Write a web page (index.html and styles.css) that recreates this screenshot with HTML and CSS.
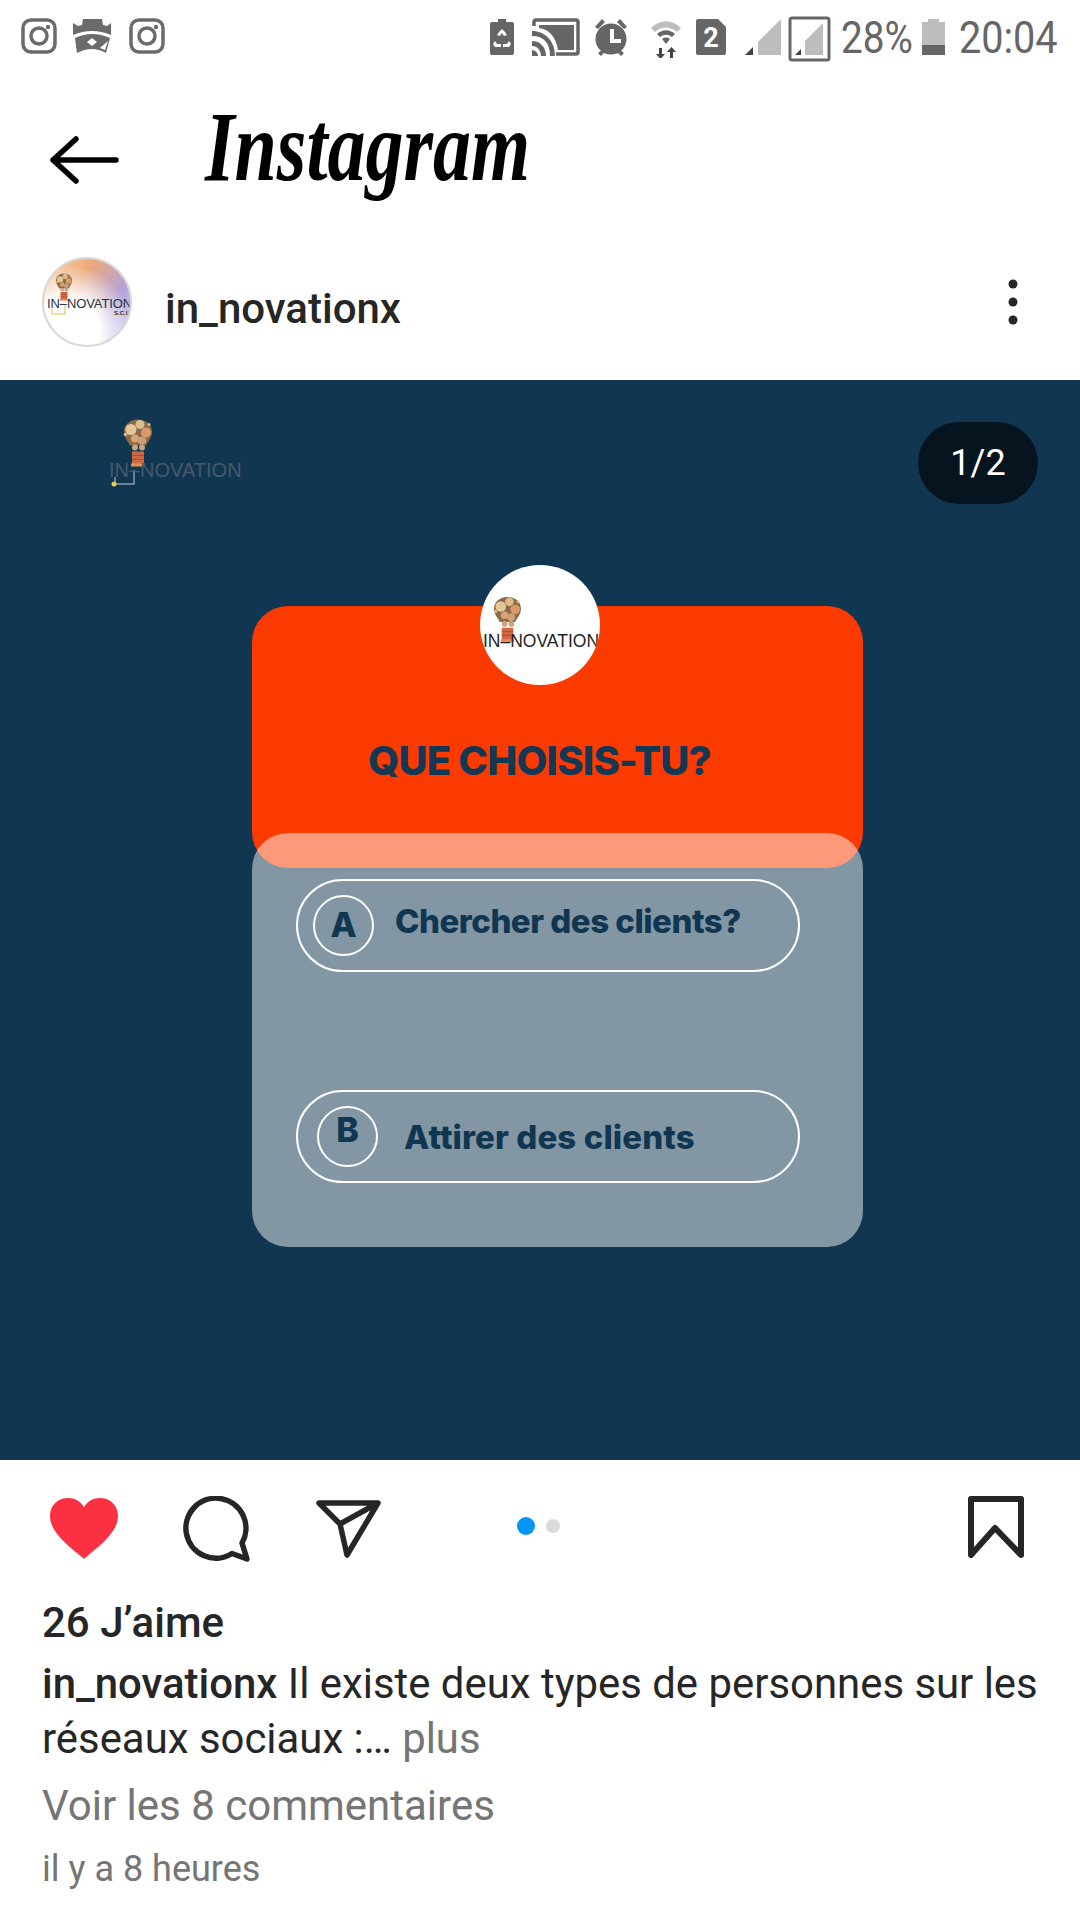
FILE: index.html
```html
<!DOCTYPE html>
<html lang="fr">
<head>
<meta charset="utf-8">
<title>Instagram</title>
<link rel="stylesheet" href="styles.css">
</head>
<body>
<svg class="defs" width="0" height="0">
  <symbol id="bulb" viewBox="0 0 30 52">
    <path d="M15 1C7 1 1 6 1 13c0 6 4 10 6 14h16c2-4 6-8 6-14 0-7-6-12-14-12z" fill="#8a6a4a"/>
    <circle cx="8" cy="11" r="5.500" fill="#e5c796"/><circle cx="17" cy="6" r="4.500" fill="#d9bd8c"/><circle cx="23" cy="14" r="5" fill="#dc9a68"/>
    <circle cx="12" cy="20" r="4" fill="#d9a273"/><circle cx="19" cy="22" r="4" fill="#c9a078"/><circle cx="2.500" cy="16" r="1.800" fill="#d9bd8c"/><circle cx="26" cy="6" r="1.500" fill="#d9bd8c"/>
    <circle cx="12" cy="29" r="3" fill="#cfa27a"/><circle cx="19" cy="29" r="3" fill="#cfa27a"/>
    <path d="M9 33h12v13H9z" fill="#cf6844"/><path d="M8 45h14v3H8z" fill="#e8904f"/><path d="M9 37h12M9 41h12" stroke="#a94f33" stroke-width="1"/>
  </symbol>
</svg>
<div class="page">
  <div class="status">
    <div class="status-left">
      <svg width="52" height="36" viewBox="0 0 52 36"><rect x="2" y="2" width="32" height="32" rx="8" fill="none" stroke="#6b6b6b" stroke-width="3.500"/><circle cx="18" cy="18" r="8" fill="none" stroke="#6b6b6b" stroke-width="3.500"/><circle cx="27" cy="9" r="2.200" fill="#6b6b6b"/></svg>
      <svg width="56" height="36" viewBox="0 0 56 36"><path d="M0 5l5 3 4-1 1-6h19l1 6 4 1 4-3v12Q19 9 0 17z" fill="#6b6b6b"/><path d="M2 20Q19 12 37 20l-4 15Q19 27 4 35z" fill="#6b6b6b"/><path d="M19 20l5 4-5 4-5-4z" fill="#fff"/><path d="M35 23l-3 9-5-2z" fill="#fff"/></svg>
      <svg width="36" height="36" viewBox="0 0 36 36"><rect x="2" y="2" width="32" height="32" rx="8" fill="none" stroke="#6b6b6b" stroke-width="3.500"/><circle cx="18" cy="18" r="8" fill="none" stroke="#6b6b6b" stroke-width="3.500"/><circle cx="27" cy="9" r="2.200" fill="#6b6b6b"/></svg>
    </div>
    <div class="status-right">
      <svg width="42" height="42" viewBox="0 0 42 42"><path d="M8 3h8v3h6a2 2 0 0 1 2 2v29a2 2 0 0 1-2 2H2a2 2 0 0 1-2-2V8a2 2 0 0 1 2-2h6z" fill="#666"/><path d="M9 16l3-3 3 3 2 3-3 1-2-3-2 3-3-1zM5 25l2 3h4v3H5l-2-3zM19 25l-2 3h-4v3h6l2-3z" fill="#fff"/></svg>
      <svg width="61" height="42" viewBox="0 0 61 42"><path d="M2 10V6a2 2 0 0 1 2-2h40a2 2 0 0 1 2 2v30a2 2 0 0 1-2 2H24" fill="none" stroke="#666" stroke-width="3.500"/><path d="M7 9h35v25H26C24 21 17 13 7 12z" fill="#666"/><path d="M0 15c13 0 23 10 23 25h-5C18 27 12 20 0 20z" fill="#666"/><path d="M0 25c8 0 14 6 14 15H9c0-6-4-10-9-10z" fill="#666"/><path d="M0 34c3 0 6 3 6 6H0z" fill="#666"/></svg>
      <svg width="57" height="42" viewBox="0 0 57 42"><circle cx="18" cy="23" r="15.500" fill="#666"/><path d="M2 11l7-8 3 3-7 7zM34 11l-7-8-3 3 7 7zM5 37l3 3 4-4-3-2zM31 37l-3 3-4-4 3-2z" fill="#666"/><path d="M17 13h4v10h7v4H17z" fill="#fff"/></svg>
      <svg width="45" height="42" viewBox="0 0 45 42"><path d="M1 12c9-9 21-9 30 0l-4 4c-7-6-15-6-22 0z" fill="#bdbdbd"/><path d="M7 18c6-5 12-5 18 0l-3 3c-4-3-8-3-12 0z" fill="#666"/><path d="M12 23c3-2 5-2 8 0l-4 5z" fill="#666"/><path d="M9 32h3v6h3l-4.500 5L6 38h3zM20 43v-7h-3l4.500-5 4.500 5h-3v7z" fill="#444"/></svg>
      <svg width="50" height="42" viewBox="0 0 50 42"><path d="M3 3h20l8 8v26a2 2 0 0 1-2 2H3a2 2 0 0 1-2-2V5a2 2 0 0 1 2-2z" fill="#666"/><text x="16" y="31" class="sim-num">2</text></svg>
      <svg width="43" height="42" viewBox="0 0 43 42"><path d="M36 3v36H13V26z" fill="#bdbdbd"/><path d="M8 31v8H0z" fill="#444"/></svg>
      <svg width="53" height="46" viewBox="0 0 53 46"><rect x="2" y="2" width="39" height="42" rx="2" fill="none" stroke="#666" stroke-width="3"/><path d="M35 7v32H17V25z" fill="#bdbdbd"/><path d="M13 33v6H7z" fill="#444"/></svg>
      <span class="status-text pct">28%</span>
      <svg width="37" height="42" viewBox="0 0 37 42"><path d="M6 3h11v3h6v33H0V6h6z" fill="#bdbdbd"/><path d="M0 29h23v10H0z" fill="#666"/></svg>
      <span class="status-text clock">20:04</span>
    </div>
  </div>

  <header class="nav">
    <svg class="back" width="70" height="48" viewBox="0 0 70 48"><path d="M3 24h63M26 3L3 24l23 21" fill="none" stroke="#000" stroke-width="5.500" stroke-linecap="round" stroke-linejoin="round"/></svg>
    <span class="wordmark">Instagram</span>
  </header>

  <div class="author">
    <div class="avatar">
      <svg width="18" height="30" class="avatar-bulb"><use href="#bulb"/></svg>
      <svg class="avatar-wire" width="20" height="14" viewBox="0 0 20 14"><path d="M16 0v9H3V4" fill="none" stroke="#d9c44c" stroke-width="1"/></svg>
      <span class="avatar-text">IN–NOVATION</span>
      <span class="avatar-sub">S.C.U</span>
    </div>
    <span class="author-name">in_novationx</span>
    <svg class="more" width="10" height="46" viewBox="0 0 10 46"><circle cx="5" cy="5" r="4.500"/><circle cx="5" cy="23" r="4.500"/><circle cx="5" cy="41" r="4.500"/></svg>
  </div>

  <main class="photo">
    <div class="photo-top">
      <div class="brand">
        <svg class="brand-bulb" width="30" height="53"><use href="#bulb"/></svg>
        <svg class="brand-wire" width="30" height="20" viewBox="0 0 30 20"><path d="M24 0v14H5V7" fill="none" stroke="#8a9cab" stroke-width="1.500"/><circle cx="4" cy="14" r="2.500" fill="#e0d24c"/></svg>
        <span class="brand-text">IN–NOVATION</span>
      </div>
      <div class="counter">1/2</div>
    </div>

    <section class="quiz">
      <div class="quiz-head">
        <div class="badge">
          <svg width="29" height="50"><use href="#bulb"/></svg>
          <span class="badge-text">IN–NOVATION</span>
        </div>
        <h1 class="quiz-title">QUE CHOISIS-TU?</h1>
      </div>
      <div class="quiz-body">
        <div class="option">
          <span class="option-key">A</span>
          <span class="option-label">Chercher des clients?</span>
        </div>
        <div class="option option-b">
          <span class="option-key key-b">B</span>
          <span class="option-label">Attirer des clients</span>
        </div>
      </div>
    </section>
  </main>

  <div class="actions">
    <svg class="heart" width="70" height="64" viewBox="0 0 70 64"><path d="M35 62C24 52 1 37 1 19 1 8 9 1 19 1c7 0 12 3 16 9 4-6 9-9 16-9 10 0 18 7 18 18 0 18-23 33-34 43z" fill="#fb3040"/></svg>
    <svg class="comment" width="70" height="68" viewBox="0 0 70 68"><path d="M60 47A30 30 0 1 0 50 57.500L65 63z" fill="none" stroke="#262626" stroke-width="5.500" stroke-linejoin="round"/></svg>
    <svg class="send" width="68" height="62" viewBox="0 0 68 62"><path d="M3 5h59L31 57 24 26zM24 26L62 5" fill="none" stroke="#262626" stroke-width="5.500" stroke-linejoin="round"/></svg>
    <div class="dots"><span class="dot dot-on"></span><span class="dot"></span></div>
    <svg class="save" width="56" height="62" viewBox="0 0 56 62"><path d="M3 3h50v56L27 32 3 59z" fill="none" stroke="#262626" stroke-width="6" stroke-linejoin="round"/></svg>
  </div>

  <div class="caption">
    <div class="likes">26 J’aime</div>
    <p class="caption-text"><b>in_novationx</b> Il existe deux types de personnes sur les réseaux sociaux :… <span class="muted">plus</span></p>
    <div class="comments muted">Voir les 8 commentaires</div>
    <div class="time">il y a 8 heures</div>
  </div>
</div>
</body>
</html>
```

FILE: styles.css
```css
* { box-sizing: border-box; }
html, body { margin: 0; padding: 0; background: #fff; }
body { font-family: Roboto, "Liberation Sans", sans-serif; color: #262626; }
.page { width: 1080px; height: 1920px; overflow: hidden; display: flex; flex-direction: column; }
.defs { position: absolute; }
svg { display: block; flex: none; }

.status { height: 72px; flex: none; display: flex; justify-content: space-between; padding: 16px 25px 0 21px; }
.status-left { display: flex; height: 36px; margin-top: 2px; }
.status-right { display: flex; height: 46px; align-items: flex-start; }
.status-text { color: #666; font-size: 45px; line-height: 44px; font-weight: 400; display: block; transform-origin: left top; white-space: nowrap; }
.pct { width: 81px; transform: scaleX(.86); }
.clock { width: 96px; transform: scaleX(.88); }
.sim-num { font: 700 27px Roboto, sans-serif; fill: #fff; text-anchor: middle; }

.nav { height: 176px; flex: none; display: flex; align-items: center; padding-left: 50px; }
.wordmark { margin: 0 0 26px 85px; font-family: "Liberation Serif", serif; font-style: italic; font-weight: 700; font-size: 100px; line-height: 100px; color: #000; transform: scaleX(.76); transform-origin: left center; }

.author { height: 132px; flex: none; display: flex; align-items: flex-start; padding: 0 42px; }
.avatar { width: 90px; height: 90px; margin-top: 9px; border-radius: 50%; border: 2px solid #d8d8d8; position: relative; overflow: hidden; flex: none; background: radial-gradient(circle at 25% 85%, #fff 0 35%, rgba(255,255,255,0) 70%), linear-gradient(125deg, #fbd7a4 0%, #eba87c 35%, #b4a3d6 68%, #cfd9f3 100%); }
.avatar-bulb { position: absolute; left: 11px; top: 14px; }
.avatar-wire { position: absolute; left: 5px; top: 46px; }
.avatar-text { position: absolute; left: 3px; top: 37px; font: 400 13px/16px "Liberation Sans", sans-serif; color: #26323c; letter-spacing: -.1px; white-space: nowrap; }
.avatar-sub { position: absolute; left: 70px; top: 50px; font: 700 6px/8px "Liberation Sans", sans-serif; color: #26323c; }
.author-name { margin: 36px 0 0 33px; font-size: 42px; font-weight: 500; line-height: 50px; }
.more { margin: 31px 20px 0 auto; fill: #262626; }

.photo { height: 1080px; flex: none; background: #113651; padding: 42px 42px 0 109px; display: flex; flex-direction: column; }
.photo-top { display: flex; justify-content: space-between; align-items: flex-start; height: 184px; }
.brand { position: relative; width: 132px; height: 72px; }
.brand-bulb { position: absolute; left: 14px; top: -4px; }
.brand-wire { position: absolute; left: 1px; top: 48px; }
.brand-text { position: absolute; left: 0; top: 35px; font: 400 20px/26px "Liberation Sans", sans-serif; color: #47596a; white-space: nowrap; }
.counter { width: 120px; height: 82px; border-radius: 41px; background: #06141f; color: #fff; font-size: 36px; display: flex; align-items: center; justify-content: center; }

.quiz { margin-left: 143px; width: 611px; }
.quiz-head { position: relative; height: 262px; background: #fb3a00; border-radius: 36px; display: flex; align-items: center; justify-content: center; padding: 48px 36px 0 0; }
.badge { position: absolute; left: 228px; top: -41px; width: 120px; height: 120px; border-radius: 50%; background: #fff; overflow: hidden; }
.badge svg { position: absolute; left: 13px; top: 31px; }
.badge-text { position: absolute; left: 3px; top: 64px; font: 400 17.500px/24px "Liberation Sans", sans-serif; color: #1f1f1f; white-space: nowrap; }
.quiz-title { margin: 0; font-family: Inter, sans-serif; font-weight: 800; font-size: 40px; line-height: 44px; color: #143753; letter-spacing: -.8px; }
.quiz-body { position: relative; margin-top: -35px; height: 414px; background: rgba(255,255,255,.48); border-radius: 36px; padding: 46px 0 0 44px; }
.option { width: 504px; height: 93px; border: 2px solid #fff; border-radius: 47px; display: flex; align-items: center; padding-left: 15px; }
.option-b { margin-top: 118px; padding-left: 19px; }
.option-key { width: 61px; height: 61px; flex: none; border: 2px solid #fff; border-radius: 50%; display: flex; align-items: center; justify-content: center; padding-bottom: 2px; font: 800 34px Inter, sans-serif; color: #113651; }
.key-b { padding-bottom: 14px; }
.option-label { margin: -9px 0 0 21px; font-family: Inter, sans-serif; font-weight: 800; font-size: 33px; color: #113651; letter-spacing: -.5px; white-space: nowrap; }
.option-b .option-label { margin: 0 0 0 26px; letter-spacing: .1px; }

.actions { height: 136px; flex: none; display: flex; align-items: flex-start; padding: 37px 56px 0 49px; }
.comment { margin: -1px 0 0 63px; }
.send { margin: 1px 0 0 64px; }
.dots { display: flex; align-items: center; gap: 11px; margin: 20px 0 0 133px; }
.dot { width: 14px; height: 14px; border-radius: 50%; background: #dbdbdb; }
.dot-on { width: 18px; height: 18px; background: #0095f6; }
.save { margin: -1px 0 0 auto; }

.caption { padding: 0 42px; }
.likes { font-size: 42px; font-weight: 500; line-height: 56px; margin-top: -1px; }
.caption-text { margin: 5px 0 0; font-size: 41.900px; line-height: 55px; width: 1010px; }
.caption-text b { font-weight: 500; }
.muted { color: #757575; }
.comments { font-size: 42px; line-height: 56px; margin-top: 12px; }
.time { font-size: 36px; line-height: 50px; color: #757575; margin-top: 10px; }
```
